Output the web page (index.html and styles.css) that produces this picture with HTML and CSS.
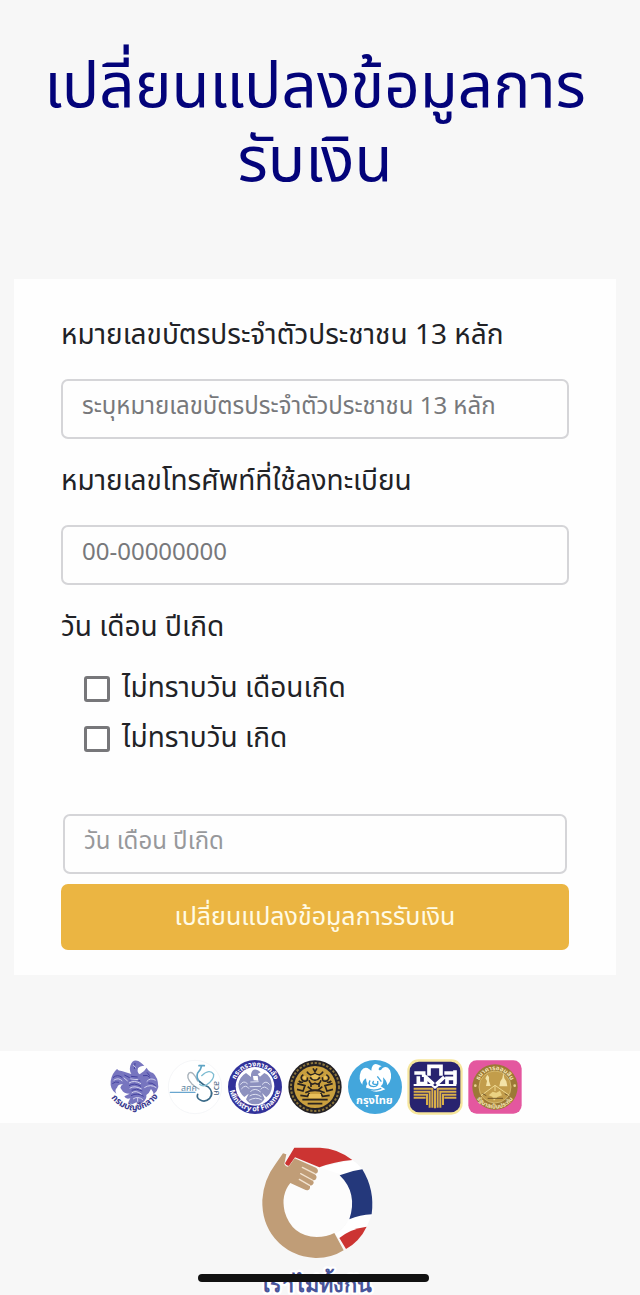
FILE: index.html
```html
<!DOCTYPE html>
<html lang="th">
<head>
<meta charset="utf-8">
<meta name="viewport" content="width=device-width, initial-scale=1">
<title>เปลี่ยนแปลงข้อมูลการรับเงิน</title>
<link rel="stylesheet" href="styles.css">
</head>
<body>
<main class="page">
  <h1 class="title">เปลี่ยนแปลงข้อมูลการ<br>รับเงิน</h1>

  <form class="card">
    <label class="label" for="citizen">หมายเลขบัตรประจำตัวประชาชน 13 หลัก</label>
    <input class="field" id="citizen" type="text" inputmode="numeric" placeholder="ระบุหมายเลขบัตรประจำตัวประชาชน 13 หลัก">

    <label class="label" for="phone">หมายเลขโทรศัพท์ที่ใช้ลงทะเบียน</label>
    <input class="field" id="phone" type="tel" placeholder="00-00000000">

    <label class="label" for="birth">วัน เดือน ปีเกิด</label>
    <div class="checks">
      <label class="check" for="no-month"><input class="box" id="no-month" type="checkbox">ไม่ทราบวัน เดือนเกิด</label>
      <label class="check" for="no-day"><input class="box" id="no-day" type="checkbox">ไม่ทราบวัน เกิด</label>
    </div>
    <div class="date"><input class="field field-date" id="birth" type="text" placeholder="วัน เดือน ปีเกิด"></div>

    <button class="submit" type="button">เปลี่ยนแปลงข้อมูลการรับเงิน</button>
  </form>
</main>

<section class="partners">
  <svg class="logo" viewBox="0 0 168 168" role="img" aria-label="กรมบัญชีกลาง">
    <defs><path id="cgd" d="M4 108Q82 202 162 104"/></defs>
    <path fill="#7775bf" d="M70 20Q76 0 94 6Q101 10 112 20Q98 20 93 28Q89 40 98 46Q112 38 119 26Q124 38 138 42Q153 54 154 84Q151 98 140 106Q139 98 132 90Q126 104 118 108Q120 120 108 130L97 138L88 130L76 136L64 130L70 118Q56 122 52 112L68 104Q50 104 44 92L40 86Q42 78 48 76Q34 74 30 86Q22 92 28 104Q8 92 11 66Q14 44 30 30Q34 36 44 36Q58 40 73 45Q66 34 70 20Z"/>
    <path d="M18 56Q32 44 46 56M52 48L68 56M16 74Q26 66 36 70M108 50Q122 46 130 56M120 40L128 50M124 72Q136 70 146 80M72 52L92 54M68 64Q82 56 100 66M66 80Q82 70 102 82M74 94Q88 86 106 96M72 110Q90 100 110 112M84 12L82 30" fill="none" stroke="#4543a0" stroke-width="3"/>
    <path d="M20 64Q34 54 46 66M50 56L62 66M146 64Q130 54 119 68M148 86Q130 74 112 86M70 60L94 62M66 72Q82 62 102 74M68 88Q82 78 104 90M74 102Q86 92 104 106M78 120Q92 110 108 122M79 18L86 26M92 128L92 116" fill="none" stroke="#d4d3ee" stroke-width="3"/>
    <text class="arc navy" font-size="27"><textPath href="#cgd" startOffset="50%" text-anchor="middle">กรมบัญชีกลาง</textPath></text>
  </svg>

  <svg class="logo" viewBox="0 0 168 168" role="img" aria-label="สศค">
    <circle cx="84" cy="84" r="80" fill="#fff" stroke="#f0f1f4" stroke-width="2"/>
    <g fill="none" stroke-linecap="round">
      <path d="M92 66Q78 34 66 42Q56 54 74 74Q84 84 96 90" stroke="#a9b3bb" stroke-width="4"/>
      <path d="M96 20H112M104 20Q102 32 92 42Q86 56 98 68" stroke="#5ea4c4" stroke-width="5"/>
      <path d="M98 68Q108 78 124 84Q142 100 128 118Q114 132 98 122Q88 116 92 106" stroke="#3a6a88" stroke-width="5"/>
      <path d="M104 50Q128 28 140 46Q142 62 118 78Q106 84 98 76" stroke="#7dbcd2" stroke-width="4"/>
      <path d="M10 100H84" stroke="#69a6cf" stroke-width="4"/>
    </g>
    <text class="small steel" x="42" y="95" font-size="26">สศค</text>
    <text class="small dark" font-size="26" transform="translate(142 66) rotate(90)">สวค</text>
  </svg>

  <svg class="logo" viewBox="0 0 168 168" role="img" aria-label="กระทรวงการคลัง Ministry of Finance">
    <defs><path id="mofT" d="M22 84A62 62 0 0 1 146 84"/><path id="mofB" d="M7 80A77 77 0 0 0 161 80"/></defs>
    <circle cx="84" cy="84" r="81" fill="#32329a"/>
    <circle cx="84" cy="82" r="58" fill="#fff"/>
    <path fill="#8d91bf" d="M72 46Q76 26 93 34L101 40L92 45L99 53L112 42Q133 50 135 82Q133 104 118 115L105 102L113 119Q103 137 85 136Q65 137 57 121L65 104L52 114Q35 101 34 76Q38 53 57 42L72 54Z"/>
    <path d="M40 77Q50 62 62 75M43 90Q56 74 66 89M128 77Q117 62 105 77M124 92Q113 77 101 91M70 69L95 68M68 83L102 82M70 98Q84 84 101 99M68 111Q84 100 103 113M66 124Q86 112 105 123" fill="none" stroke="#dee1f2" stroke-width="3"/>
    <path d="M78 51L92 51L94 65L80 64Z" fill="#fff"/>
    <text class="arc white" font-size="21"><textPath href="#mofT" startOffset="50%" text-anchor="middle">กระทรวงการคลัง</textPath></text>
    <text class="arc white" font-size="22"><textPath href="#mofB" startOffset="50%" text-anchor="middle">Ministry of Finance</textPath></text>
  </svg>

  <svg class="logo" viewBox="0 0 168 168" aria-hidden="true">
    <circle cx="84" cy="84" r="80" fill="#242124"/>
    <circle cx="84" cy="84" r="72" fill="none" stroke="#8d763c" stroke-width="6" stroke-dasharray="7 5"/>
    <circle cx="84" cy="84" r="63" fill="#c99f3e"/>
    <g fill="none" stroke="#2b2420" stroke-width="5">
      <path d="M60 38Q68 54 84 43Q100 54 108 38M49 47Q36 56 49 66Q64 69 61 55M118 47Q133 57 119 66Q103 69 107 55M69 55Q84 72 99 55M66 64Q71 80 84 73Q97 80 102 64M31 74L54 80L48 96L30 91M137 74L114 80L120 96L138 91M62 83L74 93H94L106 83M55 101Q84 87 113 101M40 109L61 112L67 102M128 109L107 112L101 102M46 122H122M62 134H106"/>
      <path d="M78 28L84 38L90 28M72 84V73M96 84V73M35 66Q42 72 48 69M133 66Q126 72 120 69"/>
    </g>
    <g fill="#e7bf5a"><path d="M66 105H102V117H66ZM72 50L78 61H90L96 50L84 45Z"/><circle cx="53" cy="56" r="5"/><circle cx="115" cy="56" r="5"/></g>
  </svg>

  <svg class="logo" viewBox="0 0 168 168" role="img" aria-label="กรุงไทย">
    <circle cx="84" cy="84" r="81" fill="#43a6dc"/>
    <path fill="#fff" d="M73 35Q75 9 94 17L104 22Q95 24 95 32Q101 37 106 28Q120 18 129 34Q139 59 121 79Q119 64 108 55Q112 75 101 82L115 91Q96 101 78 97L64 90Q52 87 61 75Q57 67 57 58Q46 65 46 77Q32 61 42 36Q53 20 67 31L73 35Z"/>
    <path d="M69 64Q60 82 80 83Q95 82 92 66M80 66Q72 77 90 76M60 89Q82 98 103 88M91 52L103 68" fill="none" stroke="#43a6dc" stroke-width="4"/>
    <text class="bold white" x="82" y="134" font-size="33" text-anchor="middle">กรุงไทย</text>
  </svg>

  <svg class="logo" viewBox="0 0 168 168" role="img" aria-label="ธกส">
    <rect x="1" y="1" width="166" height="166" rx="34" fill="#f6e69c"/>
    <rect x="8" y="8" width="152" height="152" rx="28" fill="#28236f"/>
    <g fill="none" stroke="#fff" stroke-width="11">
      <path d="M66 50V22H102V50"/>
      <path d="M22 42H50V54M34 52V74H56V54L80 76M112 42H142M144 34V76M120 76V58H144M112 54L88 76"/>
    </g>
    <path d="M20 78H74L84 86L94 78H148" fill="none" stroke="#fff" stroke-width="6"/>
    <g fill="none" stroke="#d9af49" stroke-width="6">
      <path d="M20 89H76V146M20 98H68V146M20 107H60V138M20 116H56M148 89H92V146M148 98H100V146M148 107H108V138M148 116H112M84 94V148"/>
    </g>
  </svg>

  <svg class="logo" viewBox="0 0 168 168" role="img" aria-label="ธนาคารออมสิน">
    <defs><path id="gsbT" d="M33 84A51 51 0 0 1 135 84"/><path id="gsbB" d="M19 84A65 65 0 0 0 149 84"/></defs>
    <rect x="4" y="4" width="160" height="160" rx="25" fill="#e4579f"/>
    <circle cx="84" cy="84" r="68" fill="#9c7936"/>
    <circle cx="84" cy="84" r="48" fill="#c29d4b" stroke="#e3ca80" stroke-width="2"/>
    <path d="M84 79L42 110M84 79L127 109M84 79V96" stroke="#eed88f" stroke-width="3"/>
    <path d="M61 47L66 54V66L71 81H57L60 66L55 58ZM109 41L112 58L118 67L121 82H97L100 67L106 58Z" fill="#f3e3a7"/>
    <path d="M65 109L77 98L88 101L99 95L105 109L91 114L81 125L76 113Z" fill="#ead283"/>
    <path d="M62 118H108M47 104L58 110M113 104L122 109" stroke="#72572a" stroke-width="3"/>
    <text class="arc cream" font-size="19"><textPath href="#gsbT" startOffset="50%" text-anchor="middle">ธนาคารออมสิน</textPath></text>
    <text class="arc cream" font-size="18"><textPath href="#gsbB" startOffset="50%" text-anchor="middle">รัฐบาลเป็นประกัน</textPath></text>
    <circle cx="25" cy="80" r="4" fill="#e8d394"/><circle cx="143" cy="80" r="4" fill="#e8d394"/>
  </svg>
</section>

<footer class="footer">
  <svg class="campaign" viewBox="180 30 405 450" role="img" aria-label="เราไม่ทิ้งกัน">
    <circle cx="385" cy="203" r="105" fill="#fcfcfc"/>
    <path fill="#fff" d="M487 75Q506 87 517 103L548 200L545 241L530 275L468 342L435 296Q472 278 488 225Q496 150 450 118L388 97Z"/>
    <path fill="#cc3432" d="M313 38H390Q443 40 487 75Q432 80 388 97L315 67L297 92Q289 94 285 85Z"/>
    <path fill="#24387b" d="M517 103Q555 165 545 238Q510 240 478 253Q504 174 449 121Q483 107 517 103Z"/>
    <path fill="#cc3432" d="M530 275Q509 319 468 342L448 309Q480 282 530 275Z"/>
    <path fill="#c09d77" d="M279 55L289 58L283 87Q291 101 299 91L314 70L378 98Q386 103 383 112Q381 117 373 116Q383 123 378 132Q375 137 367 135Q374 142 369 148Q365 153 359 151Q363 161 355 165Q350 167 342 163L301 144Q272 179 284 230Q305 303 380 306Q410 306 433 294L461 346Q423 370 376 369Q300 365 254 310Q215 262 217 195Q221 134 256 88Z"/>
    <path fill="none" stroke="#f2e3d0" stroke-width="4" stroke-linecap="round" d="M337 97L374 116M332 116L367 135M328 133L359 151"/>
    <text class="slogan" x="382" y="472" font-size="65" text-anchor="middle">เราไม่ทิ้งกัน</text>
  </svg>
</footer>
<div class="home-bar"></div>
</body>
</html>
```
FILE: styles.css
```css
* { box-sizing: border-box; }
body {
  margin: 0;
  background: #f7f7f7;
  color: #212226;
  font-family: "Noto Sans Thai", "Noto Sans", sans-serif;
}
.page { padding: 51px 24px 0 14px; }
.title {
  margin: 0 0 80px;
  color: #03037a;
  font-size: 62px;
  font-weight: 400;
  line-height: 74px;
  text-align: center;
}
.card {
  display: flex;
  flex-direction: column;
  padding: 35px 47px 25px;
  background: #fefefe;
}
.label {
  margin-bottom: 21px;
  font-size: 28px;
  line-height: 44px;
}
.field {
  width: 100%;
  height: 60px;
  margin-bottom: 21px;
  padding: 0 19px 4px;
  border: 2px solid #d5d5d8;
  border-radius: 7px;
  background: #fefefe;
  color: #212226;
  font: inherit;
  font-size: 24px;
}
.field::placeholder { color: #77787b; opacity: 1; }
.checks {
  display: flex;
  flex-direction: column;
  margin: -7px 0 50px 23px;
}
.check {
  display: flex;
  align-items: center;
  gap: 12px;
  font-size: 28px;
  line-height: 50px;
}
.box {
  appearance: none;
  width: 26px;
  height: 26px;
  margin: 0;
  border: 3px solid #77777a;
  border-radius: 3px;
  background: #fff;
}
.date { padding: 0 2px; }
.field-date { margin-bottom: 10px; }
.field-date::placeholder { color: #97989b; }
.submit {
  height: 66px;
  padding: 0;
  border: 0;
  border-radius: 7px;
  background: #ebb542;
  color: #fffbe6;
  font: inherit;
  font-size: 25px;
}
.partners {
  display: flex;
  justify-content: center;
  gap: 4px;
  margin-top: 76px;
  padding: 8px 10px 8px 0;
  background: #fefefe;
}
.logo { display: block; width: 56px; height: 56px; overflow: visible; }
.arc, .small, .bold { font-family: "Noto Sans Thai", "Noto Sans", sans-serif; }
.arc, .bold { font-weight: 700; }
.navy { fill: #39398f; }
.steel { fill: #5f87a3; }
.dark { fill: #47617c; }
.white { fill: #fff; }
.cream { fill: #f5e6b5; }
.footer {
  display: flex;
  justify-content: center;
  padding: 22px 5px 0 0;
}
.campaign { display: block; width: 135px; height: 150px; }
.slogan {
  fill: #47549a;
  stroke: #fff;
  stroke-width: 14px;
  stroke-linejoin: round;
  paint-order: stroke;
  font-family: sans-serif;
  font-weight: 700;
}
.home-bar {
  position: fixed;
  bottom: 13px;
  left: 31%;
  right: 33%;
  height: 8px;
  border-radius: 4px;
  background: #111;
}
```
